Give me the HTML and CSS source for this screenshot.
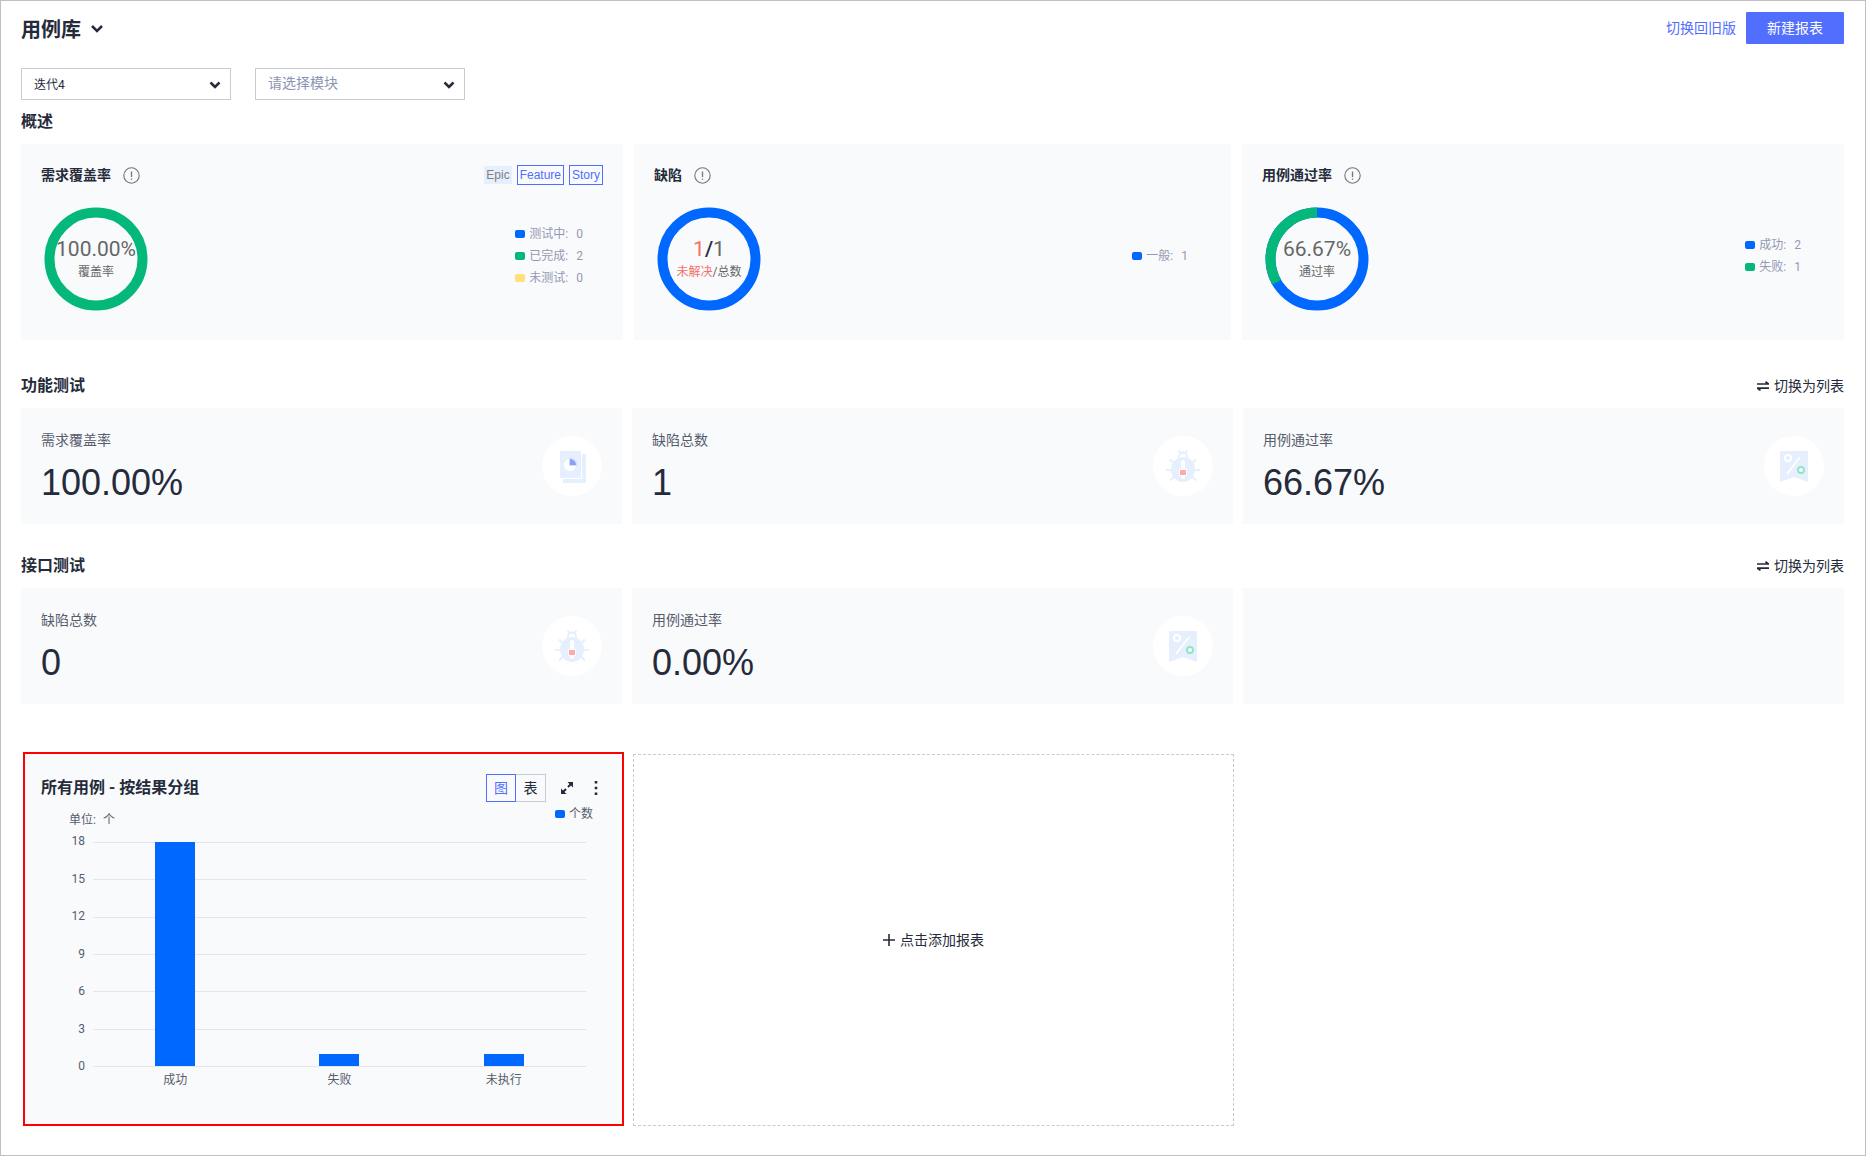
FILE: index.html
```html
<!DOCTYPE html>
<html lang="zh-CN">
<head>
<meta charset="utf-8">
<meta name="viewport" content="width=device-width, initial-scale=1">
<title>用例库</title>
<link rel="stylesheet" href="styles.css">
</head>
<body>
<svg class="sprite" width="0" height="0" aria-hidden="true">
  <defs>
    <symbol id="i-info" viewBox="0 0 17 17"><circle cx="8.500" cy="8.500" r="7.700" fill="none" stroke="#71757f" stroke-width="1.100"/><path d="M8.500 4.500v5.500M8.500 11.500v1.300" stroke="#71757f" stroke-width="1.300"/></symbol>
    <symbol id="i-swap" viewBox="0 0 12 10"><path d="M0 3h11.500L8.500.8M12 7.200H.5L3.500 9.400" fill="none" stroke="#252b3a" stroke-width="1.700"/></symbol>
    <symbol id="i-report" viewBox="0 0 60 60"><path d="M40 18h4v29H21v-4h19z" fill="#e6effd"/><path d="M18 15h21v27H18z" fill="#e6effd"/><circle cx="28" cy="29" r="6" fill="#fff"/><path d="M27 21.500a8.500 8.500 0 0 1 8.500 8.500H27z" fill="#d5defd"/><path d="M28 23a6 6 0 0 1 6 6h-6z" fill="#8b9ffa"/></symbol>
    <symbol id="i-bug" viewBox="0 0 60 60"><g stroke="#e6effd" stroke-width="2" fill="none"><path d="M25.500 14.500l2 2.500h5l2-2.500M26 22v-1.500a4 4 0 0 1 8 0V22M13 34h6M41 34h6M17 23.500l5 5M43 23.500l-5 5M17 44.500l5-5M43 44.500l-5-5"/></g><ellipse cx="30" cy="33.500" rx="12" ry="12.500" fill="#e6effd"/><rect x="28" y="24" width="4" height="19" rx="2" fill="#fff"/><path d="M26 33h8v7h-8z" fill="#fff"/><path d="M27 34h6v5h-6z" fill="#ffaaa8"/></symbol>
    <symbol id="i-rate" viewBox="0 0 60 60"><path d="M16 15h28v31l-14-5-14 5z" fill="#e6effd"/><circle cx="24" cy="22" r="3" fill="none" stroke="#fff" stroke-width="2"/><path d="M36 21L23 38" stroke="#fff" stroke-width="2"/><circle cx="37" cy="34" r="3" fill="#fff" stroke="#8de5c6" stroke-width="2"/></symbol>
  </defs>
</svg>
<main class="page">
  <header class="topbar">
    <button class="title" type="button"><h1>用例库</h1><svg width="14" height="12" viewBox="0 0 14 12"><path d="M2 2l5 5 5-5" fill="none" stroke="#252b3a" stroke-width="2.500"/></svg></button>
    <div class="actions">
      <a class="link" href="#">切换回旧版</a>
      <button class="primary" type="button">新建报表</button>
    </div>
  </header>

  <div class="filters">
    <select class="filter filter-small" aria-label="迭代"><option>迭代4</option></select>
    <select class="filter filter-empty" aria-label="模块"><option>请选择模块</option></select>
  </div>

  <h2 class="heading">概述</h2>
  <section class="overview">
    <article class="card">
      <div class="card-head">
        <h3>需求覆盖率</h3><svg class="info"><use href="#i-info"/></svg>
        <div class="tags"><button class="tag tag-off" type="button">Epic</button><button class="tag" type="button">Feature</button><button class="tag" type="button">Story</button></div>
      </div>
      <div class="card-body">
        <div class="ring">
          <svg viewBox="0 0 104 104"><circle cx="52" cy="52" r="46.500" fill="none" stroke="#04b87a" stroke-width="10"/></svg>
          <div class="ring-text"><span class="ring-value">100.00%</span><span class="ring-label">覆盖率</span></div>
        </div>
        <ul class="legend">
          <li><i class="dot"></i><span>测试中:</span><b>0</b></li>
          <li><i class="dot green"></i><span>已完成:</span><b>2</b></li>
          <li><i class="dot yellow"></i><span>未测试:</span><b>0</b></li>
        </ul>
      </div>
    </article>
    <article class="card">
      <div class="card-head"><h3>缺陷</h3><svg class="info"><use href="#i-info"/></svg></div>
      <div class="card-body">
        <div class="ring">
          <svg viewBox="0 0 104 104"><circle cx="52" cy="52" r="46.500" fill="none" stroke="#0067ff" stroke-width="10"/></svg>
          <div class="ring-text"><span class="ring-value"><em>1</em><strong>/</strong>1</span><span class="ring-label"><em>未解决</em>/总数</span></div>
        </div>
        <ul class="legend legend-inset"><li><i class="dot"></i><span>一般:</span><b>1</b></li></ul>
      </div>
    </article>
    <article class="card">
      <div class="card-head"><h3>用例通过率</h3><svg class="info"><use href="#i-info"/></svg></div>
      <div class="card-body">
        <div class="ring">
          <svg viewBox="0 0 104 104"><g fill="none" stroke-width="10"><circle cx="52" cy="52" r="46.500" stroke="#0067ff"/><path d="M52 5.500A46.500 46.500 0 0 0 11.730 75.250" stroke="#04b87a"/></g></svg>
          <div class="ring-text"><span class="ring-value">66.67%</span><span class="ring-label">通过率</span></div>
        </div>
        <ul class="legend legend-inset"><li><i class="dot"></i><span>成功:</span><b>2</b></li><li><i class="dot green"></i><span>失败:</span><b>1</b></li></ul>
      </div>
    </article>
  </section>

  <div class="section-head"><h2 class="heading">功能测试</h2><button class="switch" type="button"><svg width="12" height="10"><use href="#i-swap"/></svg>切换为列表</button></div>
  <section class="stats">
    <article class="stat"><div><h3>需求覆盖率</h3><p>100.00%</p></div><svg class="badge"><use href="#i-report"/></svg></article>
    <article class="stat"><div><h3>缺陷总数</h3><p>1</p></div><svg class="badge"><use href="#i-bug"/></svg></article>
    <article class="stat"><div><h3>用例通过率</h3><p>66.67%</p></div><svg class="badge"><use href="#i-rate"/></svg></article>
  </section>

  <div class="section-head"><h2 class="heading">接口测试</h2><button class="switch" type="button"><svg width="12" height="10"><use href="#i-swap"/></svg>切换为列表</button></div>
  <section class="stats">
    <article class="stat"><div><h3>缺陷总数</h3><p>0</p></div><svg class="badge"><use href="#i-bug"/></svg></article>
    <article class="stat"><div><h3>用例通过率</h3><p>0.00%</p></div><svg class="badge"><use href="#i-rate"/></svg></article>
    <article class="stat"></article>
  </section>

  <section class="reports">
    <article class="report">
      <div class="report-head">
        <h2 class="heading">所有用例 - 按结果分组</h2>
        <div class="views"><button class="view view-on" type="button">图</button><button class="view" type="button">表</button></div>
        <button class="icon" type="button" aria-label="全屏"><svg width="14" height="14" viewBox="0 0 14 14"><path d="M8 6l4-4M6 8l-4 4" stroke="#252b3a" stroke-width="2"/><path d="M7.500 1H13v5.500zM1 7.500V13h5.500z" fill="#252b3a"/></svg></button>
        <button class="icon" type="button" aria-label="更多"><svg width="4" height="14" viewBox="0 0 4 14"><path d="M.7 0h2.600v2.600H.7zM.7 5.700h2.600v2.600H.7zM.7 11.400h2.600V14H.7z" fill="#252b3a"/></svg></button>
      </div>
      <div class="chart-top"><span class="unit">单位:<span>个</span></span><span class="series"><i class="dot"></i>个数</span></div>
      <div class="chart">
        <div class="axis-y"><span>18</span><span>15</span><span>12</span><span>9</span><span>6</span><span>3</span><span>0</span></div>
        <div class="plot">
          <div class="col"><i class="bar" style="height:100%"></i></div>
          <div class="col"><i class="bar" style="height:5.560%"></i></div>
          <div class="col"><i class="bar" style="height:5.560%"></i></div>
        </div>
        <div class="axis-x"><span>成功</span><span>失败</span><span>未执行</span></div>
      </div>
    </article>
    <button class="add" type="button"><svg width="12" height="12" viewBox="0 0 12 12"><path d="M6 0v12M0 6h12" stroke="#252b3a" stroke-width="1.600"/></svg>点击添加报表</button>
  </section>
</main>
</body>
</html>
```
FILE: styles.css
```css
* { box-sizing: border-box; }
body {
  margin: 0;
  color: #252b3a;
  background: #fff;
  font: 14px/20px Roboto, "Noto Sans CJK SC", sans-serif;
}
h1, h2, h3, p, ul { margin: 0; padding: 0; }
ul { list-style: none; }
button { padding: 0; border: 0; background: none; color: inherit; font: inherit; cursor: pointer; }
svg { display: block; flex: none; }
em, i { font-style: normal; }
.sprite { position: absolute; }

.page { min-height: 100vh; padding: 11px 21px 29px 20px; border: 1px solid #bfbfbf; }

.topbar { display: flex; justify-content: space-between; align-items: flex-start; height: 56px; }
.title { display: flex; align-items: center; gap: 9px; height: 36px; }
.title h1 { font-size: 20px; line-height: 28px; font-weight: 700; }
.actions { display: flex; align-items: center; gap: 10px; }
.link { color: #526eff; text-decoration: none; }
.primary { width: 98px; height: 32px; border-radius: 1px; background: #526eff; color: #fff; }

.filters { display: flex; gap: 24px; }
.filter {
  width: 210px;
  height: 32px;
  padding: 0 12px;
  border: 1px solid #c8cbd6;
  border-radius: 0;
  appearance: none;
  background: #fff url("data:image/svg+xml,%3Csvg xmlns='http://www.w3.org/2000/svg' width='12' height='9'%3E%3Cpath d='M1.500 1.500L6 6l4.500-4.500' fill='none' stroke='%23252b3a' stroke-width='2.500'/%3E%3C/svg%3E") no-repeat right 9px top 12px;
  color: #252b3a;
  font: inherit;
}
.filter-small { padding-top: 2px; font-size: 12px; }
.filter-empty { padding-bottom: 2px; color: #8a94b5; }

.heading { font-size: 16px; line-height: 24px; font-weight: 700; }
.filters + .heading { margin: 10px 0; }

.overview { display: grid; grid-template-columns: 602fr 597fr 602fr; gap: 11px; }
.card { height: 196px; padding: 20px; background: #f9fafc; }
.card-head { display: flex; align-items: center; height: 22px; }
.card-head h3 { font-size: 14px; line-height: 22px; font-weight: 700; }
.info { width: 17px; height: 17px; margin-left: 12px; }
.tags { display: flex; align-items: center; gap: 5px; margin-left: auto; }
.tag { height: 20px; padding: 0 2px; border: 1px solid #526eff; color: #526eff; font: 12px/18px "Liberation Sans", sans-serif; }
.tag-off { height: 18px; padding: 0 1px; line-height: 16px; border-color: #e6effd; background: #e6effd; color: #808080; }
.card-body { display: flex; justify-content: space-between; align-items: flex-start; padding: 21px 20px 0 3px; }
.ring { display: grid; width: 104px; height: 104px; }
.ring > * { grid-area: 1 / 1; }
.ring-text { display: flex; flex-direction: column; align-items: center; justify-content: center; margin: 0 -8px; padding-top: 2px; color: #666; }
.ring-value { font-size: 21px; line-height: 24px; }
.ring-label { font-size: 12px; line-height: 22px; }
.ring em { color: #f66f6a; }
.ring strong { color: #252b3a; font-weight: 500; }
.legend { display: flex; flex-direction: column; justify-content: center; height: 98px; color: #9299b2; font-size: 12px; line-height: 22px; }
.legend-inset { margin-right: 3px; }
.legend li { display: flex; align-items: center; }
.legend b { margin-left: 8px; font-weight: 400; }
.dot { width: 10px; height: 8px; margin-right: 4px; border-radius: 2px; background: #0067ff; }
.green { background: #04b87a; }
.yellow { background: #ffe07a; }

.section-head { display: flex; justify-content: space-between; align-items: center; height: 64px; padding-top: 20px; }
.overview + .section-head { height: 68px; padding-top: 24px; }
.switch { display: flex; align-items: center; gap: 5px; }

.stats, .reports { display: grid; grid-template-columns: repeat(3, 1fr); gap: 10px; }
.stat { display: flex; justify-content: space-between; align-items: flex-start; height: 116px; padding: 20px; background: #f9fafc; }
.stat h3 { color: #575d6c; font-size: 14px; line-height: 24px; font-weight: 400; }
.stat p { font: 36px/42px "Liberation Sans", sans-serif; margin-top: 10px; }
.badge { width: 60px; height: 60px; margin-top: 8px; border-radius: 50%; background: #fff; }

.reports { gap: 9px; margin: 48px 0 0 2px; height: 374px; }
.report { padding: 18px 12px 0 16px; border: 2px solid #f00; background: #f9fafc; }
.report-head { display: flex; align-items: center; height: 32px; }
.report-head .heading { margin-right: auto; }
.views { display: flex; margin-right: 6px; }
.view { width: 30px; height: 28px; border: 1px solid #c8cbd6; border-left: 0; }
.view-on { border: 1px solid #526eff; color: #526eff; }
.icon { display: flex; align-items: center; justify-content: center; width: 29px; height: 28px; }
.chart-top { display: flex; justify-content: space-between; padding: 0 17px 0 28px; height: 38px; color: #575d6c; font-size: 12px; }
.unit { display: flex; gap: 7px; padding-top: 6px; }
.series { display: flex; align-items: center; height: 20px; }
.chart { display: grid; grid-template-columns: 44px 1fr; grid-template-rows: 225px 24px; column-gap: 8px; padding-right: 24px; color: #575d6c; font-size: 12px; }
.axis-y { display: flex; flex-direction: column; justify-content: space-between; margin: -11px 0 -9px; text-align: right; }
.plot { display: grid; grid-template-columns: repeat(3, 1fr); border-bottom: 1px solid #e3e5ea; background: repeating-linear-gradient(to bottom, #e3e5ea 0 1px, transparent 1px calc(100% / 6)); }
.col { display: flex; align-items: flex-end; justify-content: center; }
.bar { width: 40px; background: #0067ff; }
.axis-x { grid-column: 2; display: grid; grid-template-columns: repeat(3, 1fr); padding-top: 3px; text-align: center; }
.add { display: flex; align-items: center; justify-content: center; gap: 5px; margin: 2px 0 0; border: 1px dashed #c8cbd6; }
```
